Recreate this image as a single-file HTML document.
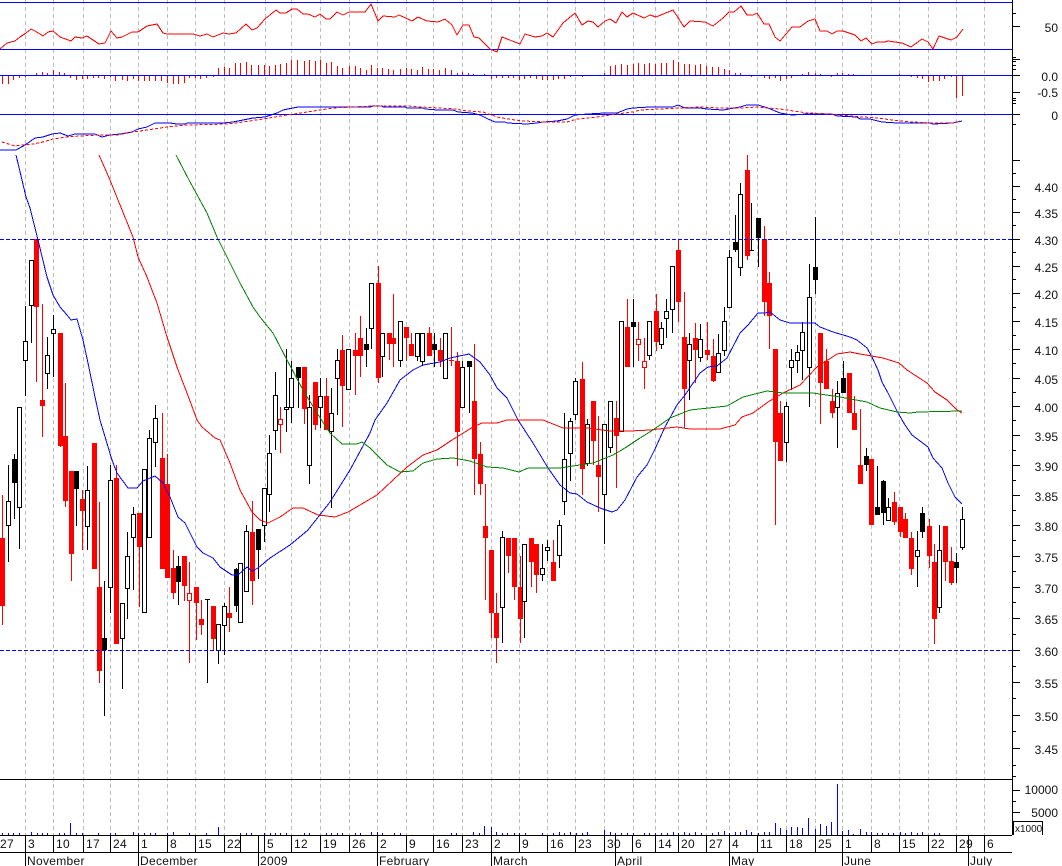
<!DOCTYPE html>
<html><head><meta charset="utf-8"><title>Chart</title>
<style>html,body{margin:0;padding:0;background:#fff;width:1062px;height:866px;overflow:hidden}svg{display:block}text{font-family:"Liberation Sans",Arial,sans-serif;font-size:12px;fill:#111}</style></head>
<body>
<svg width="1062" height="866" viewBox="0 0 1062 866" xmlns="http://www.w3.org/2000/svg" shape-rendering="crispEdges" fill="none">
<!-- grid -->
<path stroke="#bdbdbd" stroke-dasharray="4 3" d="M25.5 0V835M53.5 0V835M83.5 0V835M110.5 0V835M138.5 0V835M167.5 0V835M195.5 0V835M224.5 0V835M265.5 0V835M291.5 0V835M320.5 0V835M349.5 0V835M377.5 0V835M406.5 0V835M433.5 0V835M462.5 0V835M491.5 0V835M519.5 0V835M547.5 0V835M575.5 0V835M604.5 0V835M633.5 0V835M655.5 0V835M678.5 0V835M706.5 0V835M729.5 0V835M757.5 0V835M786.5 0V835M815.5 0V835M842.5 0V835M871.5 0V835M899.5 0V835M928.5 0V835M956.5 0V835M984.5 0V835"/>
<!-- candles -->
<path stroke="#f00" d="M2.5 495V625M36.5 239V382M42.5 304V437M60.5 333V447M65.5 383V507M71.5 471V581M82.5 490V550M94.5 443V569M99.5 502V683M116.5 465V644M139.5 513V607M162.5 413V569M167.5 454V578M173.5 550V599M184.5 556V601M189.5 562V663M196.5 587V640M201.5 600V635M213.5 606V650M229.5 587V632M252.5 501V605M280.5 407V453M304.5 367V424M315.5 382V430M326.5 378V430M342.5 335V427M355.5 333V395M360.5 316V377M378.5 266V383M389.5 333V360M393.5 294V367M406.5 327V361M411.5 333V356M429.5 327V356M440.5 338V367M451.5 327V366M449 360.5h5M457.5 352V466M474.5 344V495M480.5 442V495M485.5 484V600M491.5 550V638M496.5 593V663M508.5 538V573M514.5 538V600M520.5 556V643M531.5 538V587M536.5 544V593M553.5 540V581M582.5 362V495M593.5 401V465M598.5 416V512M616.5 401V488M627.5 299V367M638.5 322V361M644.5 338V389M656.5 294V351M678.5 239V322M684.5 292V428M695.5 323V383M707.5 322V360M713.5 339V382M747.5 155V260M764.5 226V316M769.5 272V349M775.5 349V525M780.5 401V461M820.5 333V424M826.5 349V389M832.5 389V418M849.5 373V413M854.5 396V430M860.5 409V484M871.5 459V525M894.5 492V525M900.5 507V537M905.5 513V538M911.5 532V575M929.5 519V568M934.5 544V644M945.5 526V581M951.5 547V585"/>
<path stroke="#f00" stroke-width="5" d="M2.5 538V606M36.5 239V307M42.5 400V406M60.5 333V446M65.5 436V501M71.5 471V554M82.5 499V511M94.5 443V569M99.5 587V671M116.5 478V644M139.5 513V547M162.5 458V569M167.5 484V578M173.5 568V593M184.5 556V586M196.5 587V603M201.5 619V625M213.5 606V639M229.5 613V618M252.5 532V581M304.5 367V409M315.5 382V425M326.5 396V430M342.5 350V386M355.5 350V356M360.5 338V356M378.5 283V378M389.5 333V344M393.5 338V344M406.5 327V338M411.5 344V356M429.5 333V356M440.5 350V361M457.5 361V432M474.5 401V459M480.5 454V484M485.5 526V538M491.5 550V613M496.5 613V638M508.5 538V556M514.5 538V587M520.5 587V619M531.5 538V562M536.5 544V575M553.5 562V581M582.5 379V469M593.5 401V441M598.5 465V477M616.5 418V436M627.5 327V367M656.5 311V342M678.5 250V302M684.5 337V389M695.5 338V350M707.5 350V355M713.5 356V381M747.5 170V256M764.5 239V302M769.5 283V316M775.5 349V442M780.5 413V461M820.5 333V383M826.5 361V389M832.5 401V413M849.5 373V413M854.5 413V430M860.5 465V484M871.5 459V525M894.5 502V522M900.5 507V532M905.5 519V538M911.5 538V569M929.5 526V556M934.5 562V619M945.5 526V562M951.5 561V583"/>
<path stroke="#f00" fill="#fff" d="M187.5 593.5h4V600.5h-4zM278.5 419.5h4V424.5h-4zM636.5 339.5h4V344.5h-4zM642.5 361.5h4V367.5h-4z"/>
<path stroke="#000" d="M8.5 465V562M14.5 454V519M19.5 407V549M25.5 306V396M31.5 260V343M47.5 337V389M53.5 315V377M76.5 471V526M87.5 466V550M104.5 581V716M110.5 465V613M122.5 603V689M127.5 532V619M133.5 507V590M149.5 430V537M155.5 405V467M178.5 556V605M207.5 599V683M205 599.5h5M218.5 624V664M224.5 603V655M236.5 568V612M246.5 525V591M258.5 529V579M264.5 488V542M269.5 435V512M275.5 372V450M286.5 349V432M291.5 361V423M298.5 367V408M309.5 395V484M320.5 378V428M331.5 388V508M337.5 349V415M366.5 328V367M371.5 283V349M382.5 333V377M400.5 321V367M417.5 333V361M422.5 333V366M434.5 333V367M462.5 361V407M469.5 361V413M502.5 531V643M524.5 544V638M542.5 544V581M547.5 540V561M559.5 520V568M564.5 413V515M570.5 418V481M575.5 378V420M587.5 419V466M604.5 424V544M610.5 401V453M633.5 299V367M649.5 321V360M661.5 322V349M666.5 299V338M672.5 266V333M689.5 333V400M700.5 324V362M718.5 334V372M724.5 307V356M729.5 250V307M735.5 215V252M740.5 183V276M751.5 203V250M749 250.5h5M758.5 218V267M786.5 402V462M791.5 349V390M797.5 345V373M802.5 322V380M809.5 264V407M815.5 217V294M837.5 381V448M843.5 361V393M866.5 448V471M877.5 466V515M883.5 480V525M888.5 498V520M917.5 531V587M922.5 507V538M939.5 525V613M956.5 553V583M962.5 507V550"/>
<path stroke="#000" stroke-width="5" d="M14.5 459V483M76.5 471V489M104.5 638V650M178.5 566V582M236.5 569V606M258.5 529V550M298.5 367V378M366.5 344V350M434.5 344V350M469.5 361V367M633.5 322V327M735.5 242V250M758.5 218V238M815.5 267V280M843.5 378V393M866.5 456V465M877.5 507V515M883.5 481V513M922.5 513V532M956.5 562V568"/>
<path stroke="#000" fill="#fff" d="M6.5 501.5h4V525.5h-4zM17.5 407.5h4V507.5h-4zM23.5 341.5h4V360.5h-4zM29.5 260.5h4V305.5h-4zM45.5 355.5h4V373.5h-4zM51.5 329.5h4V333.5h-4zM85.5 490.5h4V526.5h-4zM108.5 480.5h4V587.5h-4zM120.5 603.5h4V638.5h-4zM125.5 556.5h4V588.5h-4zM131.5 514.5h4V537.5h-4zM142.5 469.5h4V612.5h-4zM147.5 438.5h4V537.5h-4zM153.5 418.5h4V442.5h-4zM216.5 624.5h4V650.5h-4zM222.5 606.5h4V625.5h-4zM238.5 563.5h4V622.5h-4zM244.5 531.5h4V591.5h-4zM262.5 488.5h4V525.5h-4zM267.5 453.5h4V494.5h-4zM273.5 395.5h4V430.5h-4zM284.5 407.5h4V409.5h-4zM289.5 378.5h4V407.5h-4zM307.5 407.5h4V465.5h-4zM318.5 396.5h4V407.5h-4zM329.5 413.5h4V431.5h-4zM335.5 360.5h4V378.5h-4zM346.5 349.5h4V389.5h-4zM369.5 283.5h4V328.5h-4zM380.5 333.5h4V356.5h-4zM398.5 321.5h4V360.5h-4zM415.5 333.5h4V356.5h-4zM420.5 333.5h4V361.5h-4zM443.5 333.5h4V378.5h-4zM460.5 367.5h4V407.5h-4zM500.5 537.5h4V607.5h-4zM522.5 544.5h4V601.5h-4zM540.5 568.5h4V574.5h-4zM545.5 547.5h4V550.5h-4zM557.5 525.5h4V555.5h-4zM562.5 459.5h4V501.5h-4zM568.5 421.5h4V453.5h-4zM573.5 381.5h4V414.5h-4zM585.5 424.5h4V463.5h-4zM602.5 424.5h4V494.5h-4zM608.5 401.5h4V447.5h-4zM619.5 321.5h4V431.5h-4zM647.5 321.5h4V355.5h-4zM659.5 328.5h4V344.5h-4zM664.5 311.5h4V318.5h-4zM670.5 266.5h4V309.5h-4zM687.5 344.5h4V360.5h-4zM698.5 339.5h4V357.5h-4zM716.5 353.5h4V372.5h-4zM722.5 321.5h4V350.5h-4zM727.5 257.5h4V307.5h-4zM738.5 194.5h4V267.5h-4zM784.5 406.5h4V442.5h-4zM789.5 360.5h4V367.5h-4zM795.5 352.5h4V360.5h-4zM800.5 332.5h4V350.5h-4zM807.5 297.5h4V367.5h-4zM835.5 393.5h4V407.5h-4zM886.5 507.5h4V520.5h-4zM915.5 550.5h4V556.5h-4zM937.5 550.5h4V607.5h-4zM960.5 519.5h4V547.5h-4z"/>
<!-- moving averages -->
<polyline stroke="#00f" points="16,155 22,180 26,197 30,208 38,240 47,277 53,295 60,307 67,315 71,320 77,319 83,340 88,363 95,397 100,420 106,440 112,460 117,473 128,488 137,488 143,481 155,476 163,483 170,497 178,517 185,523 197,547 203,553 213,558 220,567 232,575 238,575 247,567 252,571 258,568 270,558 290,545 308,530 330,502 350,470 370,433 375,420 387,403 400,380 413,370 423,365 440,362 450,358 469,354 480,362 490,375 497,388 507,398 518,420 533,443 548,468 560,485 570,493 577,494 587,502 600,508 612,512 617,510 625,500 637,477 647,465 655,449 665,427 677,405 685,395 700,373 708,367 717,366 727,358 740,333 748,325 758,313 765,313 770,312 780,320 790,323 815,323 820,327 833,332 850,337 857,340 867,348 872,357 878,370 882,382 888,393 898,413 905,425 912,435 920,441 928,447 933,458 942,468 948,483 955,497 962,504"/>
<polyline stroke="#f00" points="99,155 110,180 118,200 133,237 138,257 147,277 157,303 167,337 177,367 187,393 197,420 202,427 215,438 220,440 230,463 240,490 252,512 260,520 268,523 280,517 293,508 303,508 318,515 335,517 348,512 360,505 377,495 393,480 407,467 423,455 437,450 452,440 473,427 482,423 497,423 507,420 543,420 563,428 587,428 610,431 630,431 650,430 677,427 690,429 720,429 735,425 742,417 753,413 768,402 783,393 800,385 817,367 837,354 850,352 860,354 883,358 899,363 907,370 927,383 935,392 947,400 957,410 962,413"/>
<polyline stroke="#008000" points="176,155 189,180 207,213 217,237 230,263 240,283 253,307 260,317 273,333 287,360 303,390 317,413 330,433 342,444 357,444 362,442 370,448 387,465 400,472 413,471 423,463 437,459 453,458 470,461 487,467 503,468 519,472 528,468 560,468 573,466 593,463 613,455 625,448 640,438 653,430 670,418 690,410 727,406 743,397 767,391 783,393 813,393 840,397 867,402 880,408 897,412 910,413 918,412 962,411"/>
<!-- panel lines -->
<path stroke="#00f" d="M0 2.5H1012M0 49.5H1012M0 114.5H1012"/>
<path stroke="#00f" stroke-dasharray="4 2" d="M0 239.5H1012M0 650.5H1012"/>
<!-- RSI -->
<polyline stroke="#f00" points="0,49 7,43 15,41 20,37 26,33 31,29 35,31 43,36 48,32 53,31 60,37 71,41 75,37 82,38 87,36 99,44 105,43 111,31 117,38 122,37 132,32 138,32 147,26 157,24 163,33 167,34 193,34 200,36 207,34 213,37 223,33 229,34 236,33 246,24 252,30 257,28 265,19 276,10 280,13 286,13 292,9 297,9 303,14 308,14 315,17 320,14 326,19 330,19 337,12 343,15 349,12 365,12 371,4 378,21 383,16 395,17 399,15 412,21 418,17 427,21 438,22 445,19 452,25 457,35 463,25 469,25 474,37 479,38 490,49 497,52 502,37 520,44 525,34 535,37 542,36 547,33 553,37 563,23 575,13 582,25 588,21 593,22 598,27 605,21 610,19 616,23 622,12 627,17 633,13 644,18 650,15 656,17 673,10 684,27 690,21 705,22 713,26 723,18 729,12 734,12 741,6 747,15 753,15 757,13 764,24 769,24 775,37 780,41 792,27 800,27 808,21 815,19 820,31 827,31 832,34 837,31 843,31 855,35 861,41 866,38 872,44 877,42 885,42 888,41 902,43 911,47 922,39 928,42 933,49 939,36 951,40 957,37 963,29"/>
<!-- histogram -->
<path stroke="#f00" d="M2.5 75V84M8.5 75V84M13.5 75V80M19.5 75V78M25.5 75V77M36.5 75V73M42.5 75V72M47.5 75V73M53.5 75V70M59.5 75V72M64.5 75V73M70.5 75V78M76.5 75V80M82.5 75V79M87.5 75V79M93.5 75V78M98.5 75V78M104.5 75V79M110.5 75V77M115.5 75V81M122.5 75V80M127.5 75V81M133.5 75V79M138.5 75V81M144.5 75V81M149.5 75V81M155.5 75V81M161.5 75V81M167.5 75V83M173.5 75V84M178.5 75V84M184.5 75V83M189.5 75V78M195.5 75V78M200.5 75V79M206.5 75V78M213.5 75V77M218.5 75V68M224.5 75V67M229.5 75V68M235.5 75V63M240.5 75V63M246.5 75V62M251.5 75V65M258.5 75V65M264.5 75V65M269.5 75V66M275.5 75V65M280.5 75V64M286.5 75V63M291.5 75V60M297.5 75V60M304.5 75V61M309.5 75V60M315.5 75V61M320.5 75V60M326.5 75V63M331.5 75V62M337.5 75V66M342.5 75V68M349.5 75V66M355.5 75V66M360.5 75V68M366.5 75V70M371.5 75V65M377.5 75V68M382.5 75V68M388.5 75V69M393.5 75V70M400.5 75V69M406.5 75V68M411.5 75V69M417.5 75V70M422.5 75V67M428.5 75V69M433.5 75V69M439.5 75V70M445.5 75V68M451.5 75V70M457.5 75V73M462.5 75V72M468.5 75V73M473.5 75V74M484.5 75V74M491.5 75V79M496.5 75V78M502.5 75V78M508.5 75V78M513.5 75V78M519.5 75V80M524.5 75V79M530.5 75V78M536.5 75V79M542.5 75V80M547.5 75V80M553.5 75V80M558.5 75V79M564.5 75V79M570.5 75V77M582.5 75V77M604.5 75V73M610.5 75V66M615.5 75V65M621.5 75V64M627.5 75V65M633.5 75V64M638.5 75V63M644.5 75V64M649.5 75V63M655.5 75V64M661.5 75V63M666.5 75V63M673.5 75V60M678.5 75V62M684.5 75V64M689.5 75V64M695.5 75V65M700.5 75V64M706.5 75V66M712.5 75V67M718.5 75V67M724.5 75V69M729.5 75V70M735.5 75V73M740.5 75V73M751.5 75V77M764.5 75V78M769.5 75V79M775.5 75V78M780.5 75V81M786.5 75V79M791.5 75V78M802.5 75V74M808.5 75V72M815.5 75V73M820.5 75V74M831.5 75V77M837.5 75V73M842.5 75V73M848.5 75V74M853.5 75V74M860.5 75V76M899.5 75V74M911.5 75V77M917.5 75V78M922.5 75V79M928.5 75V82M933.5 75V81M939.5 75V81M944.5 75V79M951.5 75V77M956.5 75V98M962.5 75V96"/>
<path stroke="#00f" d="M0 75.5H1012"/>
<!-- MACD -->
<polyline stroke="#00f" points="0,150 16,150 25,145 35,138 43,137 52,134 60,133 68,136 75,134 95,134 102,137 110,135 120,134 132,132 138,129 147,127 155,123 170,123 177,124 185,124 187,123 223,123 233,122 253,118 265,117 277,113 283,110 298,107 370,107 373,106 382,106 383,107 405,107 407,108 423,108 425,109 438,110 453,110 458,112 472,113 480,115 488,119 495,122 505,122 507,123 527,124 537,123 543,122 557,121 567,119 575,115 588,114 605,113 617,113 627,109 633,108 650,107 673,107 678,105 685,108 700,108 707,109 723,110 740,107 747,105 758,105 768,108 780,113 792,115 807,114 832,114 837,116 857,117 860,119 870,119 882,122 897,123 930,123 933,124 953,123 962,121"/>
<polyline stroke="#f00" stroke-dasharray="3 2" points="2,142 15,146 23,145 33,144 43,142 53,139 67,137 80,136 100,135 117,135 133,132 147,130 167,127 187,125 227,124 243,122 263,119 287,115 307,112 333,108 373,106 407,106 420,107 440,108 455,109 467,111 483,112 497,117 508,119 523,121 547,122 567,122 577,119 597,117 617,114 633,112 640,110 660,109 700,107 720,108 740,108 757,107 780,109 807,113 830,114 850,116 877,118 900,121 913,122 930,123 953,123 960,121"/>
<!-- volume -->
<path stroke="#00f" d="M2.5 835V833M8.5 835V833M13.5 835V833M19.5 835V833M31.5 835V832M37.5 835V833M42.5 835V833M47.5 835V833M59.5 835V833M64.5 835V833M70.5 835V823M76.5 835V833M82.5 835V833M98.5 835V833M110.5 835V833M115.5 835V833M133.5 835V832M138.5 835V833M144.5 835V833M150.5 835V833M155.5 835V833M167.5 835V833M173.5 835V832M189.5 835V833M206.5 835V833M218.5 835V827M240.5 835V833M246.5 835V833M251.5 835V833M264.5 835V833M270.5 835V833M275.5 835V833M280.5 835V833M286.5 835V833M304.5 835V833M309.5 835V833M326.5 835V833M331.5 835V833M337.5 835V833M342.5 835V833M355.5 835V833M360.5 835V833M371.5 835V832M377.5 835V832M382.5 835V833M394.5 835V833M400.5 835V833M451.5 835V833M456.5 835V833M473.5 835V832M479.5 835V833M484.5 835V826M491.5 835V827M496.5 835V832M502.5 835V833M507.5 835V833M514.5 835V833M519.5 835V833M525.5 835V833M542.5 835V833M553.5 835V833M559.5 835V832M564.5 835V833M570.5 835V832M576.5 835V833M582.5 835V833M587.5 835V832M604.5 835V830M610.5 835V832M615.5 835V833M621.5 835V833M627.5 835V833M633.5 835V833M644.5 835V833M649.5 835V833M655.5 835V833M661.5 835V833M667.5 835V833M673.5 835V832M678.5 835V833M684.5 835V832M689.5 835V833M695.5 835V832M701.5 835V833M712.5 835V833M718.5 835V832M724.5 835V831M729.5 835V833M735.5 835V832M740.5 835V832M746.5 835V830M751.5 835V832M758.5 835V833M764.5 835V832M769.5 835V832M775.5 835V823M780.5 835V828M786.5 835V830M791.5 835V827M797.5 835V827M802.5 835V828M808.5 835V818M815.5 835V829M820.5 835V824M826.5 835V826M831.5 835V822M837.5 835V784M842.5 835V831M848.5 835V830M853.5 835V834M860.5 835V829M866.5 835V832M871.5 835V832M877.5 835V833M882.5 835V833M888.5 835V833M893.5 835V833M900.5 835V832M905.5 835V833M911.5 835V832M917.5 835V833M922.5 835V832M934.5 835V833M939.5 835V833"/>
<!-- frame & axes -->
<path stroke="#000" d="M0 779.5H1012M0 835.5H1012M0 852.5H1012M1012.5 0V835M1013 821.5H1042M1013.5 821V835M1042.5 821V835M25.5 835V866M53.5 835V852M83.5 835V852M110.5 835V852M138.5 835V866M167.5 835V852M195.5 835V852M224.5 835V852M240.5 835V852M258.5 835V866M264.5 835V852M291.5 835V852M320.5 835V852M349.5 835V852M377.5 835V866M406.5 835V852M433.5 835V852M462.5 835V852M491.5 835V866M519.5 835V852M547.5 835V852M575.5 835V852M604.5 835V852M615.5 835V866M632.5 835V852M655.5 835V852M678.5 835V852M706.5 835V852M729.5 835V866M757.5 835V852M786.5 835V852M815.5 835V852M842.5 835V866M871.5 835V852M899.5 835V852M928.5 835V852M956.5 835V852M968.5 835V866M984.5 835V852"/>
<path stroke="#000" d="M1012 26.5h8M1012 59.5h8M1012 75.5h8M1012 92.5h8M1012 114.5h8M1012 160.5h8M1012 186.5h8M1012 212.5h8M1012 239.5h8M1012 266.5h8M1012 293.5h8M1012 321.5h8M1012 349.5h8M1012 378.5h8M1012 406.5h8M1012 435.5h8M1012 465.5h8M1012 495.5h8M1012 525.5h8M1012 556.5h8M1012 587.5h8M1012 618.5h8M1012 650.5h8M1012 682.5h8M1012 715.5h8M1012 748.5h8M1012 790.5h8M1012 812.5h8"/>
<path stroke="#000" d="M1012 13.5h4M1012 57.5h4M1012 61.5h4M1012 65.5h4M1012 69.5h4M1012 98.5h4M1012 100.5h4M1012 103.5h4M1012 124.5h4M1012 173.5h4M1012 199.5h4M1012 225.5h4M1012 252.5h4M1012 279.5h4M1012 307.5h4M1012 335.5h4M1012 363.5h4M1012 392.5h4M1012 420.5h4M1012 450.5h4M1012 480.5h4M1012 510.5h4M1012 540.5h4M1012 571.5h4M1012 602.5h4M1012 634.5h4M1012 666.5h4M1012 698.5h4M1012 731.5h4M1012 765.5h4M1012 776.5h4M1012 801.5h4"/>
<!-- axis labels -->
<g text-anchor="end">
<text x="1058" y="32">50</text><text x="1058" y="81">0.0</text><text x="1058" y="97">-0.5</text><text x="1058" y="120">0</text>
<text x="1058" y="192">4.40</text><text x="1058" y="218">4.35</text><text x="1058" y="245">4.30</text><text x="1058" y="272">4.25</text><text x="1058" y="299">4.20</text><text x="1058" y="327">4.15</text><text x="1058" y="355">4.10</text><text x="1058" y="384">4.05</text><text x="1058" y="412">4.00</text><text x="1058" y="441">3.95</text><text x="1058" y="471">3.90</text><text x="1058" y="501">3.85</text><text x="1058" y="531">3.80</text><text x="1058" y="562">3.75</text><text x="1058" y="593">3.70</text><text x="1058" y="624">3.65</text><text x="1058" y="656">3.60</text><text x="1058" y="688">3.55</text><text x="1058" y="721">3.50</text><text x="1058" y="754">3.45</text>
<text x="1058" y="794">10000</text><text x="1058" y="817">5000</text>
</g>
<text x="1015" y="832" style="font-size:10px">x1000</text>
<!-- date row -->
<g letter-spacing=".3">
<text x="0" y="848">27</text><text x="28" y="848">3</text><text x="56" y="848">10</text><text x="86" y="848">17</text><text x="113" y="848">24</text><text x="141" y="848">1</text><text x="170" y="848">8</text><text x="198" y="848">15</text><text x="227" y="848">22</text><text x="267" y="848">5</text><text x="294" y="848">12</text><text x="323" y="848">19</text><text x="352" y="848">26</text><text x="380" y="848">2</text><text x="409" y="848">9</text><text x="436" y="848">16</text><text x="465" y="848">23</text><text x="494" y="848">2</text><text x="522" y="848">9</text><text x="550" y="848">16</text><text x="578" y="848">23</text><text x="607" y="848">30</text><text x="635" y="848">6</text><text x="658" y="848">14</text><text x="681" y="848">20</text><text x="709" y="848">27</text><text x="732" y="848">4</text><text x="760" y="848">11</text><text x="789" y="848">18</text><text x="818" y="848">25</text><text x="845" y="848">1</text><text x="874" y="848">8</text><text x="902" y="848">15</text><text x="931" y="848">22</text><text x="959" y="848">29</text><text x="987" y="848">6</text>
<text x="27" y="865">November</text><text x="140" y="865">December</text><text x="260" y="865">2009</text><text x="379" y="865">February</text><text x="493" y="865">March</text><text x="617" y="865">April</text><text x="731" y="865">May</text><text x="844" y="865">June</text><text x="970" y="865">July</text>
</g>
</svg>
</body></html>
